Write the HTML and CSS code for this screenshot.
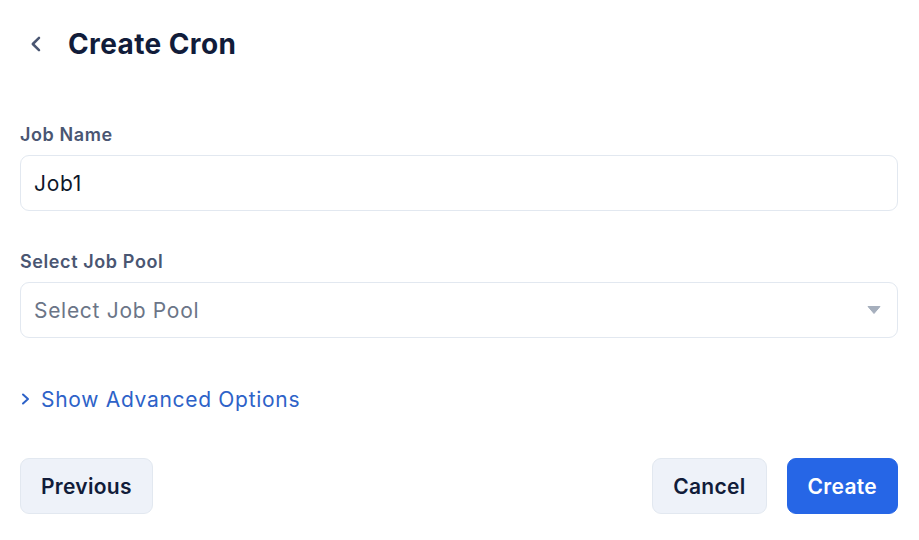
FILE: index.html
```html
<!DOCTYPE html>
<html lang="en">
<head>
<meta charset="utf-8">
<title>Create Cron</title>
<link rel="stylesheet" href="styles.css">
</head>
<body>
<div class="page">
  <header class="header">
    <button class="back" aria-label="Back">
      <svg width="20" height="20" viewBox="0 0 20 20"><path d="M13 3.8 L6.8 10 L13 16.2" fill="none" stroke="#4a5672" stroke-width="2.5" stroke-linecap="round" stroke-linejoin="round"/></svg>
    </button>
    <h1 class="title">Create Cron</h1>
  </header>

  <div class="field field-first">
    <label class="label">Job Name</label>
    <div class="input">Job1</div>
  </div>

  <div class="field">
    <label class="label">Select Job Pool</label>
    <div class="input select">
      <span class="placeholder">Select Job Pool</span>
      <svg class="caret" width="14" height="10" viewBox="0 0 14 10"><path d="M1 1.5 H13 L7 8.5 Z" fill="#a6afbd" stroke="#a6afbd" stroke-width="1" stroke-linejoin="round"/></svg>
    </div>
  </div>

  <div class="advanced">
    <svg width="12" height="14" viewBox="0 0 12 14"><path d="M3 2.5 L8 7 L3 11.5" fill="none" stroke="#2d62c8" stroke-width="2" stroke-linecap="round" stroke-linejoin="round"/></svg>
    <span>Show Advanced Options</span>
  </div>

  <div class="actions">
    <button class="btn">Previous</button>
    <div class="actions-right">
      <button class="btn">Cancel</button>
      <button class="btn btn-primary">Create</button>
    </div>
  </div>
</div>
</body>
</html>
```

FILE: styles.css
```css
* { box-sizing: border-box; }
html, body { margin: 0; padding: 0; background: #ffffff; }
body {
  font-family: Inter, "Noto Sans", "Liberation Sans", sans-serif;
  color: #0f172a;
}
.page {
  width: 919px;
  padding: 20px 21px 0 20px;
}
.header {
  display: flex;
  align-items: center;
  height: 48px;
}
.back {
  display: flex;
  align-items: center;
  justify-content: center;
  width: 20px;
  height: 20px;
  padding: 0;
  margin: 0 22px 0 6px;
  border: none;
  background: none;
}
.title {
  margin: 0;
  font-size: 28px;
  font-weight: 700;
  color: #111c3a;
  letter-spacing: 0.4px;
}
.field { display: flex; flex-direction: column; gap: 8px; margin-top: 39px; }
.field-first { margin-top: 55px; }
.label {
  font-size: 18px;
  line-height: 24px;
  font-weight: 600;
  color: #4a5672;
  letter-spacing: 0.6px;
}
.input {
  height: 56px;
  border: 1px solid #e2e8f0;
  border-radius: 9px;
  padding: 0 13px;
  display: flex;
  align-items: center;
  font-size: 21px;
  letter-spacing: 0.7px;
  color: #0f172a;
}
.select { justify-content: space-between; padding-right: 16px; }
.placeholder { color: #6b7587; }
.advanced {
  margin-top: 49px;
  display: flex;
  align-items: center;
  gap: 9px;
  height: 24px;
  font-size: 21px;
  letter-spacing: 0.7px;
  color: #2d62c8;
}
.actions {
  margin-top: 47px;
  display: flex;
  justify-content: space-between;
}
.actions-right { display: flex; gap: 20px; }
.btn {
  height: 56px;
  padding: 0 20px;
  border: 1px solid #e2e8f0;
  border-radius: 9px;
  background: #eef2f9;
  font-family: inherit;
  font-size: 21px;
  letter-spacing: 0.3px;
  font-weight: 600;
  color: #111c3a;
}
.btn-primary {
  background: #2666e6;
  border-color: #2666e6;
  color: #ffffff;
}
```
